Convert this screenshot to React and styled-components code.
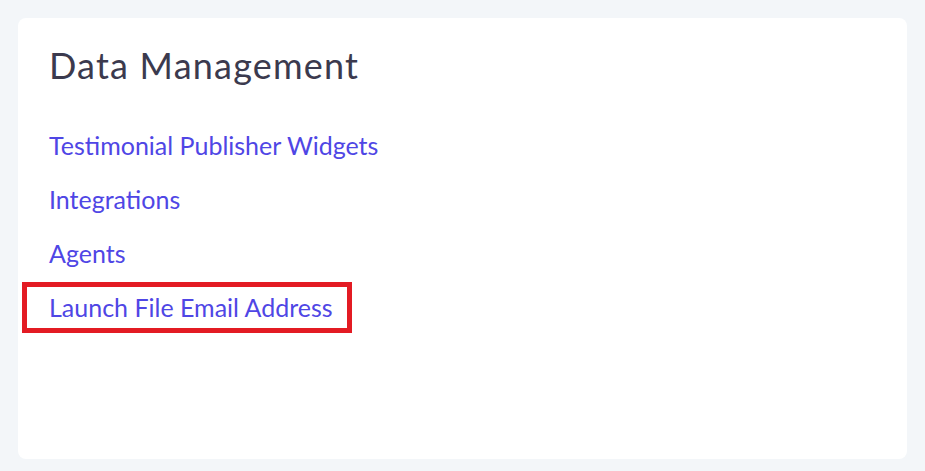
import React from "react";
import styled, { createGlobalStyle } from "styled-components";

const GlobalStyle = createGlobalStyle`
  body {
    margin: 0;
    background: #f3f6f9;
    font-family: Lato, "Open Sans", sans-serif;
  }
`;

const Page = styled.div`
  padding: 18px;
  height: 471px;
  box-sizing: border-box;
`;

const Card = styled.section`
  background: #ffffff;
  border-radius: 8px;
  width: 889px;
  height: 441px;
  padding: 25px 31px;
  box-sizing: border-box;
`;

const Title = styled.h2`
  margin: 0 0 43px;
  font-size: 36px;
  font-weight: 400;
  letter-spacing: 1.2px;
  line-height: 44px;
  color: #3b3a4e;
`;

const LinkList = styled.ul`
  list-style: none;
  margin: 0;
  padding: 0;
  display: flex;
  flex-direction: column;
  align-items: flex-start;
  gap: 24px;
`;

const Item = styled.li`
  ${({ highlighted }) =>
    highlighted &&
    `
    margin: -10px 0 0 -27px;
    padding: 5px 14px 6px 22px;
    border: 5px solid #e31b23;
  `}
`;

const Link = styled.a`
  display: block;
  font-size: 25px;
  line-height: 30px;
  color: #4f46e5;
  text-decoration: none;
`;

const links = [
  "Testimonial Publisher Widgets",
  "Integrations",
  "Agents",
  "Launch File Email Address",
];

export default function App() {
  return (
    <>
      <GlobalStyle />
      <Page>
        <Card>
          <Title>Data Management</Title>
          <LinkList>
            {links.map((label, i) => (
              <Item key={label} highlighted={i === links.length - 1}>
                <Link href="#">{label}</Link>
              </Item>
            ))}
          </LinkList>
        </Card>
      </Page>
    </>
  );
}
